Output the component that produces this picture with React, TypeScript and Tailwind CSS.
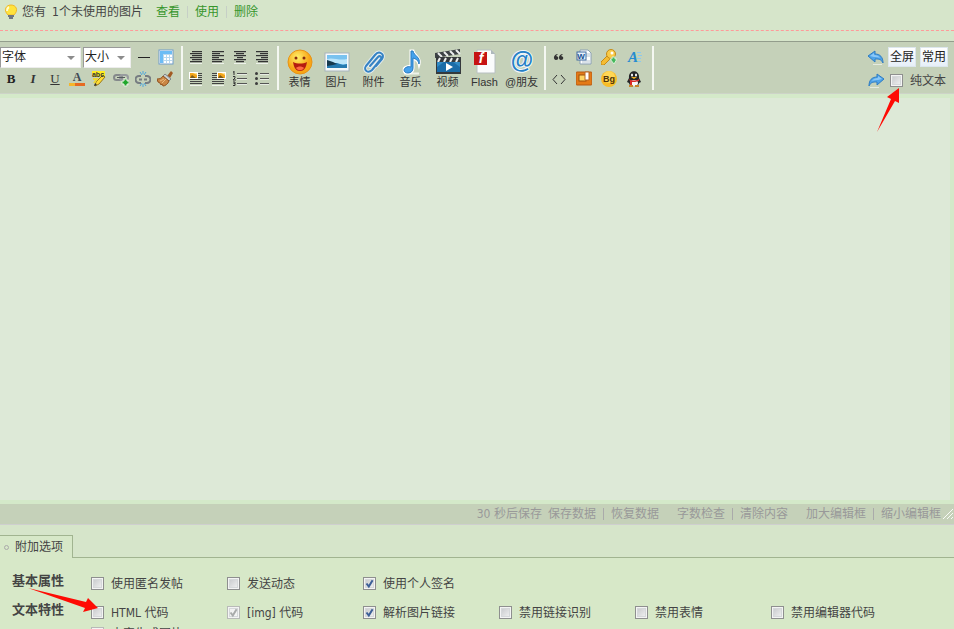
import type { ReactNode } from 'react'

type Tool = { name: string; icon: ReactNode }

function Icon({ children, size = 16 }: { children: ReactNode; size?: number }) {
  return (
    <svg width={size} height={size} viewBox={`0 0 ${size} ${size}`} aria-hidden="true" className="block">
      {children}
    </svg>
  )
}

function ToolButton({ tool, className = 'w-[22px]' }: { tool: Tool; className?: string }) {
  return (
    <button type="button" title={tool.name} className={`${className} h-[22px] flex items-center justify-center text-[#333]`}>
      {tool.icon}
    </button>
  )
}

function Divider() {
  return <div className="w-0.5 h-11 bg-[#f4f7f1] shrink-0" />
}

function Dropdown({ label, className }: { label: string; className: string }) {
  return (
    <div className={`${className} relative h-[21px] shrink-0`}>
      <select
        aria-label={label}
        className="appearance-none block w-full h-full bg-white border border-t-[#999] border-l-[#999] border-b-[#ededed] border-r-[#ededed] pl-px text-xs text-[#222] rounded-none"
      >
        <option>{label}</option>
      </select>
      <svg width="8" height="4" viewBox="0 0 8 4" className="absolute right-[6px] top-[9px] pointer-events-none">
        <path d="M0 0h8L4 4z" fill="#8c8c8c" />
      </svg>
    </div>
  )
}

function Checkbox({ label, checked, disabled }: { label: string; checked?: boolean; disabled?: boolean }) {
  return (
    <label className="flex items-start gap-[7px] leading-[18px] whitespace-nowrap">
      <span className="relative block w-[13px] h-[13px] mt-0.5 shrink-0">
        <input
          type="checkbox"
          defaultChecked={checked}
          disabled={disabled}
          className="peer appearance-none block w-[13px] h-[13px] border border-[#8e8f8f] bg-linear-to-br from-[#c3c5c8] to-[#f6f6f6] shadow-[inset_0_0_0_1px_#f4f4f4,inset_0_0_0_2px_#d5d8da] disabled:border-[#b8bab8] disabled:from-[#f0f0f0]"
        />
        <svg width="13" height="13" viewBox="0 0 13 13" className="absolute inset-0 hidden peer-checked:block pointer-events-none">
          <path d="M3.5 6.5l2.3 3L9.6 3.2" fill="none" stroke={disabled ? '#a9abab' : '#3c5f97'} strokeWidth="2" />
        </svg>
      </span>
      {label}
    </label>
  )
}

function Lines({ rows }: { rows: [number, number][] }) {
  return (
    <Icon>
      {rows.map(([x, w], i) => (
        <g key={i}>
          <rect x={x} y={2 + i * 2} width={w} height="1" fill="#333" />
          <rect x={x} y={3 + i * 2} width={w} height="1" fill="#a4ac9d" />
        </g>
      ))}
      <path d="M2 14.500h12" stroke="#eef2ea" />
    </Icon>
  )
}

function Thumb({ right }: { right?: boolean }) {
  return (
    <Icon>
      <path d="M2 2.500h12M2 4.500h12M2 6.500h12M2 8.500h12M2 10.500h12M2 12.500h12" stroke="#444" />
      <path d="M2 14.500h12" stroke="#eef2ea" />
      <g transform={right ? 'translate(6 0)' : undefined}>
        <rect x="1" y="1" width="9" height="7" fill="#fff" />
        <rect x="2" y="2" width="7" height="5" fill="#f3a51b" />
        <path d="M2 7l2-3 4 3z" fill="#7c5b18" />
        <path d="M5 2h4v2z" fill="#ffe38a" />
      </g>
    </Icon>
  )
}

function Curve({ flip }: { flip?: boolean }) {
  return (
    <Icon>
      <g transform={flip ? 'matrix(-1 0 0 1 16 0)' : undefined}>
        <path d="M0 7l7-5v3c5 0 8 3 8 9-2-4-4-4-8-4v3z" fill="#4ea3e8" stroke="#2f7cc2" strokeLinejoin="round" />
        <path d="M2 7l4-3v2c3 0 5 1 6 3-2-1-4-1-6-1z" fill="#8cc8f7" />
        <path d="M5 15.500h9" stroke="#e5ebe1" />
      </g>
    </Icon>
  )
}

const styleTools: Tool[] = [
  { name: '粗体', icon: <b className="font-[Liberation_Serif,serif] text-[13px] text-[#222]">B</b> },
  { name: '斜体', icon: <i className="font-[Liberation_Serif,serif] text-[13px] font-bold">I</i> },
  { name: '下划线', icon: <span className="font-[Liberation_Serif,serif] text-[13px] underline">U</span> },
  {
    name: '文字颜色',
    icon: (
      <Icon>
        <text x="8" y="10" textAnchor="middle" fontSize="12" fontWeight="bold" fontFamily="Liberation Serif" fill="#404954">A</text>
        <path d="M0 13.500h16" stroke="#e66a22" strokeWidth="3" />
        <path d="M0 13.500h6" stroke="#f5b62b" strokeWidth="3" />
      </Icon>
    ),
  },
  {
    name: '背景色',
    icon: (
      <Icon>
        <path d="M1 0h13v6H1z" fill="#ffed24" />
        <path d="M14 6l-6 7-4 2 1-4 7-7z" fill="#ffdc35" stroke="#98771c" />
        <path d="M3 15l3-1-2-2z" fill="#333" />
        <path d="M2 8l4 0-3 4" fill="none" stroke="#eed934" strokeWidth="2" />
        <text x="7" y="6" textAnchor="middle" fontSize="7" fontWeight="bold" fontFamily="Liberation Sans" fill="#333">abc</text>
      </Icon>
    ),
  },
  {
    name: '添加链接',
    icon: (
      <Icon>
        <rect x="1" y="4" width="8" height="5" rx="2.500" fill="none" stroke="#85898b" strokeWidth="2" />
        <rect x="7" y="4" width="8" height="5" rx="2.500" fill="none" stroke="#979b9e" strokeWidth="2" />
        <path d="M4 6.500h8" stroke="#555b5e" />
        <path d="M11 8h3v2h2v3h-2v2h-3v-2H9v-3h2z" fill="#22a62c" stroke="#e5f1df" />
      </Icon>
    ),
  },
  {
    name: '移除链接',
    icon: (
      <Icon>
        <path d="M6 5H4a3 3 0 000 7h2M10 5h2a3 3 0 010 7h-2M4 8.500h3M9 8.500h3" fill="none" stroke="#777d82" strokeWidth="2" />
        <path d="M5 1l2 3M11 1L9 4M5 15l2-3M11 15l-2-3M8 0v3M8 13v3" stroke="#4ca7dc" />
      </Icon>
    ),
  },
  {
    name: '清除格式',
    icon: (
      <Icon>
        <path d="M10 5l4-5 2 2-3 5z" fill="#a25a23" />
        <path d="M8 3l6 5-2 2-6-5z" fill="#c9ced0" stroke="#80868a" />
        <path d="M6 5l6 5c-1 3-4 5-6 5l-1-2-1 1-1-2-2-1-1-3c3 0 5-1 6-3z" fill="#c98645" stroke="#925421" />
        <path d="M3 10l4-2M5 12l4-4" stroke="#eab97c" />
      </Icon>
    ),
  },
]

const layoutTools: Tool[][] = [
  [
    { name: '自动排版', icon: <Lines rows={[[4, 10], [2, 12], [4, 10], [2, 12], [4, 10], [2, 12]]} /> },
    { name: '居左', icon: <Lines rows={[[2, 12], [2, 8], [2, 12], [2, 7], [2, 12], [2, 10]]} /> },
    { name: '居中', icon: <Lines rows={[[2, 12], [4, 8], [2, 12], [5, 6], [2, 12], [4, 8]]} /> },
    { name: '居右', icon: <Lines rows={[[2, 12], [6, 8], [2, 12], [7, 7], [2, 12], [4, 10]]} /> },
  ],
  [
    { name: '左浮动', icon: <Thumb /> },
    { name: '右浮动', icon: <Thumb right /> },
    {
      name: '排序的列表',
      icon: (
        <Icon>
          <path d="M5 2.500h10M5 7.500h10M5 12.500h10" stroke="#555" />
          <path d="M5 3.500h10M5 8.500h10M5 13.500h10" stroke="#e6ece2" />
          <path d="M2 0v4M1 1h1M1 5.500h2v1.500l-2 2h3M1 11h2v1.500H1.500M3 12.500v2H1" fill="none" stroke="#333" />
        </Icon>
      ),
    },
    {
      name: '未排序列表',
      icon: (
        <Icon>
          <path d="M6 2.500h9M6 7.500h9M6 12.500h9" stroke="#555" />
          <path d="M6 3.500h9M6 8.500h9M6 13.500h9" stroke="#e6ece2" />
          <circle cx="2.500" cy="2.500" r="1.500" fill="#3c3c3c" />
          <circle cx="2.500" cy="7.500" r="1.500" fill="#3c3c3c" />
          <circle cx="2.500" cy="12.500" r="1.500" fill="#3c3c3c" />
        </Icon>
      ),
    },
  ],
]

const mediaTools: Tool[] = [
  {
    name: '表情',
    icon: (
      <Icon size={26}>
        <defs>
          <radialGradient id="smile" cx=".4" cy=".3">
            <stop stopColor="#fff06a" />
            <stop offset="1" stopColor="#f8a516" />
          </radialGradient>
        </defs>
        <circle cx="13" cy="13" r="12" fill="url(#smile)" stroke="#e79317" />
        <circle cx="9" cy="9" r="1.500" fill="#8a2b0d" />
        <circle cx="17" cy="9" r="1.500" fill="#8a2b0d" />
        <path d="M6 13c4 2 10 2 14 0-1 6-3 9-7 9s-6-3-7-9z" fill="#b51b10" />
        <path d="M9 19c2-2 6-2 8 0-2 3-6 3-8 0z" fill="#ff6a43" />
      </Icon>
    ),
  },
  {
    name: '图片',
    icon: (
      <Icon size={26}>
        <rect x="1" y="4" width="24" height="18" fill="#f6f9fa" stroke="#a7b4bd" />
        <rect x="3" y="6" width="20" height="13" fill="#79c2ef" />
        <path d="M3 10c6-2 12 2 20 0v5H3z" fill="#bce5fa" />
        <path d="M3 13l5 1 5 0 6 2 4-1v4H3z" fill="#277ab0" />
        <path d="M3 11l6 2 4 2-4 1-6 1z" fill="#17394e" />
      </Icon>
    ),
  },
  {
    name: '附件',
    icon: (
      <Icon size={26}>
        <g fill="none" strokeLinecap="round" strokeLinejoin="round">
          <path d="M9 17l8-9c2-2 4 0 3 2L11 21c-4 4-9 0-6-4L14 6c4-5 10-1 7 4l-6 7" stroke="#e6eef0" strokeWidth="4" />
          <path d="M9 17l8-9c2-2 4 0 3 2L11 21c-4 4-9 0-6-4L14 6c4-5 10-1 7 4l-6 7" stroke="#3683c4" strokeWidth="2" />
        </g>
      </Icon>
    ),
  },
  {
    name: '音乐',
    icon: (
      <Icon size={26}>
        <path d="M6 24.500h15" stroke="#eef2ea" strokeWidth="2" />
        <g transform="translate(1 0)">
          <path d="M12 2h2c1 5 8 6 6 13-1-4-3-5-6-6v10c0 3-2 5-5 5-5 0-5-5-1-6 2-1 3 0 4 0z" fill="#46a2ed" stroke="#fff" strokeWidth="3" />
          <path d="M12 2h2c1 5 8 6 6 13-1-4-3-5-6-6v10c0 3-2 5-5 5-5 0-5-5-1-6 2-1 3 0 4 0z" fill="#46a2ed" stroke="#277ac0" />
        </g>
      </Icon>
    ),
  },
  {
    name: '视频',
    icon: (
      <Icon size={26}>
        <path d="M0 4l25-4v5L0 9z" fill="#3c4144" />
        <path d="M3 4l4 4M9 3l4 4M15 2l4 4M21 1l4 4" stroke="#eceeee" strokeWidth="2" />
        <rect x="1" y="8" width="25" height="17" fill="#35393c" />
        <path d="M5 9l-2 4M11 9l-2 4M17 9l-2 4M23 9l-2 4" stroke="#eceeee" strokeWidth="2" />
        <rect x="2" y="13" width="23" height="10" fill="#318bc5" />
        <path d="M2 18l7-5h9l7 5v5H2z" fill="#1b6ca8" />
        <path d="M11 14l7 4-7 4z" fill="#fff" />
      </Icon>
    ),
  },
  {
    name: 'Flash',
    icon: (
      <Icon size={26}>
        <path d="M5 1h14l4 4v19H5z" fill="#fafcfc" stroke="#b8c0c2" />
        <path d="M19 1v4h4z" fill="#aeb9bd" />
        <rect x="2" y="3" width="13" height="13" fill="#c61313" />
        <text x="9" y="14" textAnchor="middle" fontSize="14" fontStyle="italic" fontWeight="bold" fontFamily="Liberation Sans" fill="#fff">f</text>
      </Icon>
    ),
  },
  {
    name: '@朋友',
    icon: (
      <Icon size={26}>
        <text x="13" y="19" textAnchor="middle" fontSize="23" fontWeight="bold" fontFamily="Liberation Sans" fill="#2580c7" stroke="#f3f8fa" strokeWidth="2" paintOrder="stroke">@</text>
      </Icon>
    ),
  },
]

const extraTools: Tool[][] = [
  [
    {
      name: '引用',
      icon: (
        <Icon>
          <path d="M7 5c-5 0-5 6-2 6 3 0 3-4 0-4zM12 5c-5 0-5 6-2 6 3 0 3-4 0-4z" fill="#333" />
        </Icon>
      ),
    },
    {
      name: '文档',
      icon: (
        <Icon>
          <path d="M4 1h8l3 3v11H4z" fill="#fff" stroke="#8ba0b5" />
          <path d="M10 5h4M10 7h4M6 12h8M6 14h8" stroke="#b5c4d2" />
          <rect x="1" y="3" width="9" height="8" fill="#e9f2fb" stroke="#426da1" />
          <text x="5" y="10" textAnchor="middle" fontSize="8" fontWeight="bold" fontFamily="Liberation Sans" fill="#164f91">W</text>
        </Icon>
      ),
    },
    {
      name: '密码',
      icon: (
        <Icon>
          <path d="M8 7l2 2-7 7H0v-3l6-6z" fill="#f5bd34" stroke="#c58a18" />
          <circle cx="10" cy="5" r="4.500" fill="#f9cb48" stroke="#c58a18" />
          <circle cx="11" cy="4" r="1.500" fill="#fff" />
          <path d="M9 10h2V8h3v2h2l-3 5z" fill="#45b85c" stroke="#d7f0d4" />
        </Icon>
      ),
    },
    {
      name: '艺术字',
      icon: (
        <Icon>
          <path d="M11 3.500h4M12 6.500h4M11 9.500h4M12 12.500h3" stroke="#8bc9ef" />
          <text x="7" y="13" textAnchor="middle" fontSize="15" fontStyle="italic" fontWeight="bold" fontFamily="Liberation Serif" fill="#268bd0">A</text>
        </Icon>
      ),
    },
  ],
  [
    { name: '代码', icon: <Icon><path d="M6 4L2 8.500 6 13M10 4l4 4.500L10 13" fill="none" stroke="#333" strokeWidth="1" /></Icon> },
    {
      name: '隐藏内容',
      icon: (
        <Icon>
          <rect x="0" y="1" width="16" height="13" rx="1" fill="#e47a17" stroke="#b55b14" />
          <rect x="3" y="4" width="7" height="6" fill="#ffd562" stroke="#99510e" />
          <path d="M9 1h4v8H9z" fill="#fff" stroke="#b86722" />
        </Icon>
      ),
    },
    {
      name: '背景',
      icon: (
        <Icon>
          <circle cx="8" cy="8" r="8" fill="#f8bd26" />
          <circle cx="8" cy="6" r="6" fill="#ffd755" />
          <text x="8" y="11" textAnchor="middle" fontSize="9" fontWeight="bold" fontFamily="Liberation Sans" fill="#51350b">Bg</text>
        </Icon>
      ),
    },
    {
      name: 'QQ',
      icon: (
        <Icon>
          <path d="M3 7c-1-9 11-9 10 0l2 4-2 1c0 2-2 3-5 3s-5-1-5-3l-2-1z" fill="#252628" />
          <ellipse cx="8" cy="12" rx="4" ry="3" fill="#f8f8f8" />
          <ellipse cx="6" cy="4" rx="1" ry="1.500" fill="#fff" />
          <ellipse cx="10" cy="4" rx="1" ry="1.500" fill="#fff" />
          <path d="M5 6h6l-3 2z" fill="#f3b022" />
          <path d="M3 8c3 2 7 2 10 0v2c-3 1-5 1-7 1v3H4v-4z" fill="#db2828" />
          <path d="M3 15h4M9 15h4" stroke="#c9822a" strokeWidth="2" />
        </Icon>
      ),
    },
  ],
]

function Pipe() {
  return <span className="w-px h-3 mx-[7px] bg-[#aaa]" />
}

export default function App() {
  return (
    <div className="h-screen overflow-hidden bg-[#d7e8c8] text-xs text-[#444] font-[DejaVu_Sans_Condensed,Noto_Sans_CJK_SC,sans-serif]">
      {/* Unused image notice */}
      <div className="h-[41px] bg-[#d6e5ca]">
        <div className="h-[31px] flex items-start border-b border-dashed border-[#ff9a9a] pl-1 pt-1">
          <div className="flex items-center h-4">
            <svg width="14" height="16" viewBox="0 0 14 16" aria-hidden="true">
              <path d="M4 11C-1 6 2 1 7 1s8 5 3 10z" fill="#ffe33d" stroke="#efb72b" />
              <path d="M5 3c-2 1-2 3-2 4" stroke="#fffbd0" strokeWidth="2" fill="none" />
              <path d="M4 12h6M5 14h4" stroke="#707781" strokeWidth="2" />
            </svg>
            <span className="ml-1">您有</span>
            <span className="ml-[6px]">1个未使用的图片</span>
            <a href="#view" className="ml-[13px] text-[#36952c]">查看</a>
            <span className="w-px h-3 mx-[7px] bg-[#c6cfc6]" />
            <a href="#use" className="text-[#36952c]">使用</a>
            <span className="w-px h-3 mx-[7px] bg-[#c6cfc6]" />
            <a href="#delete" className="text-[#36952c]">删除</a>
          </div>
        </div>
      </div>

      {/* Toolbar */}
      <div className="flex border-t border-[#939d8c] bg-[#c5d1b9] py-1 shadow-[inset_0_-1px_0_#cdd3c8]">
        <div className="w-[181px] shrink-0">
          <div className="flex items-center h-[22px]">
            <Dropdown label="字体" className="w-[81px] mr-0.5" />
            <Dropdown label="大小" className="w-12 mr-0.5" />
            <ToolButton tool={{ name: '分隔线', icon: <Icon><path d="M2 8.500h12" stroke="#222" /></Icon> }} />
            <ToolButton
              tool={{
                name: '表格',
                icon: (
                  <Icon>
                    <rect x="1" y="1" width="14" height="14" fill="#fff" stroke="#719dca" />
                    <path d="M2 2h12v3H2zM2 5h3v9H2z" fill="#6bbcf5" />
                    <path d="M5 5.500h9M5 8.500h9M5 11.500h9M5.500 5v9M8.500 5v9M11.500 5v9" stroke="#b7d8ef" />
                  </Icon>
                ),
              }}
            />
          </div>
          <div className="flex">
            {styleTools.map((t) => <ToolButton key={t.name} tool={t} />)}
          </div>
        </div>
        <Divider />
        <div className="ml-0.5 mr-1 shrink-0">
          {layoutTools.map((row, i) => (
            <div key={i} className="flex">
              {row.map((t) => <ToolButton key={t.name} tool={t} />)}
            </div>
          ))}
        </div>
        <Divider />
        <div className="flex ml-0.5 mr-1 shrink-0">
          {mediaTools.map((t) => (
            <button key={t.name} type="button" className="w-[37px] flex flex-col items-center pt-[3px] text-[11px] leading-[14px] text-[#333] font-[Liberation_Sans,Noto_Sans_CJK_SC,sans-serif] whitespace-nowrap">
              {t.icon}
              {t.name}
            </button>
          ))}
        </div>
        <Divider />
        <div className="mr-1.5 shrink-0">
          {extraTools.map((row, i) => (
            <div key={i} className="flex">
              {row.map((t) => <ToolButton key={t.name} tool={t} className="w-[25px]" />)}
            </div>
          ))}
        </div>
        <Divider />
        <div className="ml-auto pr-1.5 shrink-0">
          <div className="flex items-center h-[22px]">
            <button type="button" title="撤销" className="mr-1"><Curve /></button>
            <button type="button" className="w-7 h-5 mr-1 border border-[#dce6ed] bg-linear-to-b from-white to-[#e6eff8] text-[#222]">全屏</button>
            <button type="button" className="w-7 h-5 border border-[#dce6ed] bg-linear-to-b from-white to-[#e6eff8] text-[#222]">常用</button>
          </div>
          <div className="flex items-start h-[22px] relative pt-1">
            <button type="button" title="重做" className="mr-1.5"><Curve flip /></button>
            <Checkbox label="纯文本" />
            <svg width="24" height="46" viewBox="0 0 24 46" aria-hidden="true" className="absolute left-2 top-5 z-10 pointer-events-none">
              <path d="M23 0L11 9l4 2L1 44l18-31 4 2z" fill="#fe0b04" />
            </svg>
          </div>
        </div>
      </div>

      {/* Message body */}
      <div className="bg-[#d4e9c9] pt-1 pb-1 pr-1">
        <textarea aria-label="内容" className="block w-full h-[402px] resize-none bg-[#dde9d7] p-2 outline-none" />
      </div>

      <div className="relative flex justify-end items-center h-[21px] bg-[#c5d1b9] border-b border-[#cfcfcf] pr-[13px] text-[#999]">
        <span className="mr-1.5">30 秒后保存</span>
        <a href="#save">保存数据</a>
        <Pipe />
        <a href="#restore">恢复数据</a>
        <a href="#count" className="ml-[18px]">字数检查</a>
        <Pipe />
        <a href="#clear">清除内容</a>
        <a href="#larger" className="ml-[18px]">加大编辑框</a>
        <Pipe />
        <a href="#smaller">缩小编辑框</a>
        <svg width="12" height="12" viewBox="0 0 12 12" aria-hidden="true" className="absolute right-0 bottom-1">
          <path d="M1 11L11 1M5 11l6-6M9 11l2-2" stroke="#f9fbf7" strokeWidth="1" />
        </svg>
      </div>

      {/* Tabs */}
      <div className="flex items-end bg-[#d6e5ca] pt-[10px]">
        <button type="button" className="flex items-center h-[23px] pl-1 pr-[9px] gap-[6px] bg-[#d7e8c8] border-t border-r border-[#a1b490]">
          <span className="w-[5px] h-[5px] rounded-full border border-[#aaa]" />
          附加选项
        </button>
        <div className="flex-1 h-[23px] border-b border-[#a1b490]" />
      </div>

      {/* Post options */}
      <div className="relative pl-3 pt-[14px]">
        <div className="flex h-[29px]">
          <h2 className="w-[79px] shrink-0 text-[13px] leading-[18px] font-bold">基本属性</h2>
          <div className="grid grid-cols-[repeat(6,136px)] pt-[3px] items-start">
            <Checkbox label="使用匿名发帖" />
            <Checkbox label="发送动态" />
            <Checkbox label="使用个人签名" checked />
          </div>
        </div>
        <div className="flex">
          <h2 className="w-[79px] shrink-0 text-[13px] leading-[18px] font-bold">文本特性</h2>
          <div className="grid grid-cols-[repeat(6,136px)] gap-y-[3px] pt-[3px] items-start">
            <Checkbox label="HTML 代码" />
            <Checkbox label="[img] 代码" checked disabled />
            <Checkbox label="解析图片链接" checked />
            <Checkbox label="禁用链接识别" />
            <Checkbox label="禁用表情" />
            <Checkbox label="禁用编辑器代码" />
            <Checkbox label="内容生成图片" disabled />
          </div>
        </div>
        <svg width="70" height="26" viewBox="0 0 70 26" aria-hidden="true" className="absolute left-7 top-[30px] pointer-events-none">
          <path d="M0 0l58 14 2-4 10 10-15 4 2-4z" fill="#fe0b04" />
        </svg>
      </div>
    </div>
  )
}
